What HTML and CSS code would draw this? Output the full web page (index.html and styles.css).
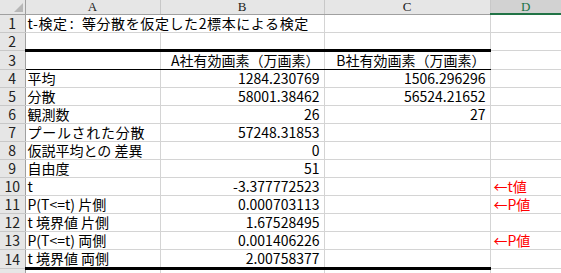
FILE: index.html
```html
<!DOCTYPE html>
<html lang="ja">
<head>
<meta charset="utf-8">
<link rel="stylesheet" href="styles.css">
</head>
<body>
<div class="frame">
<table class="sheet">
  <colgroup>
    <col class="c-hdr"><col class="c-a"><col class="c-b"><col class="c-c"><col class="c-d">
  </colgroup>
  <thead>
    <tr class="colhead">
      <th class="corner"><span class="tri"></span></th>
      <th>A</th><th>B</th><th>C</th><th class="sel">D</th>
    </tr>
  </thead>
  <tbody>
    <tr><th class="rh">1</th><td colspan="2" class="txt title">t-検定<span class="colon">:</span> 等分散を仮定した2標本による検定</td><td></td><td></td></tr>
    <tr class="thick"><th class="rh">2</th><td></td><td></td><td></td><td class="plain"></td></tr>
    <tr class="thin"><th class="rh">3</th><td></td><td class="num">A社有効画素（万画素）</td><td class="num">B社有効画素（万画素）</td><td class="plain"></td></tr>
    <tr><th class="rh">4</th><td class="txt">平均</td><td class="num">1284.230769</td><td class="num">1506.296296</td><td></td></tr>
    <tr><th class="rh">5</th><td class="txt">分散</td><td class="num">58001.38462</td><td class="num">56524.21652</td><td></td></tr>
    <tr><th class="rh">6</th><td class="txt">観測数</td><td class="num">26</td><td class="num">27</td><td></td></tr>
    <tr><th class="rh">7</th><td class="txt wide">プールされた分散</td><td class="num">57248.31853</td><td></td><td></td></tr>
    <tr><th class="rh">8</th><td class="txt">仮説平均との 差異</td><td class="num">0</td><td></td><td></td></tr>
    <tr><th class="rh">9</th><td class="txt">自由度</td><td class="num">51</td><td></td><td></td></tr>
    <tr><th class="rh">10</th><td class="txt">t</td><td class="num">-3.377772523</td><td></td><td class="note">←t値</td></tr>
    <tr><th class="rh">11</th><td class="txt">P(T&lt;=t) 片側</td><td class="num">0.000703113</td><td></td><td class="note">←P値</td></tr>
    <tr><th class="rh">12</th><td class="txt">t 境界値 片側</td><td class="num">1.67528495</td><td></td><td></td></tr>
    <tr><th class="rh">13</th><td class="txt">P(T&lt;=t) 両側</td><td class="num">0.001406226</td><td></td><td class="note">←P値</td></tr>
    <tr class="thick"><th class="rh">14</th><td class="txt">t 境界値 両側</td><td class="num">2.00758377</td><td></td><td class="plain"></td></tr>
    <tr class="stub"><th class="rh"></th><td></td><td></td><td></td><td></td></tr>
  </tbody>
</table>
</div>
</body>
</html>
```
FILE: styles.css
```css
html, body {
  margin: 0;
  padding: 0;
  background: #ffffff;
}
body {
  font-family: "Noto Sans CJK JP", "Noto Sans", sans-serif;
  font-size: 14px;
  color: #000;
}
.frame {
  width: 561px;
  height: 273px;
  overflow: hidden;
}
.sheet {
  border-collapse: collapse;
  table-layout: fixed;
  width: 561px;
}
.c-hdr { width: 25px; }
.c-a { width: 135px; }
.c-b { width: 164px; }
.c-c { width: 166px; }
.c-d { width: 71px; }

.colhead th {
  height: 13px;
  padding: 0;
  background: #e6e6e6;
  border-right: 1px solid #c8c8c8;
  border-bottom: 1px solid #a0a0a0;
  font-family: "Liberation Serif", serif;
  font-weight: normal;
  font-size: 13px;
  line-height: 13px;
  color: #222;
  text-align: center;
  vertical-align: middle;
}
.colhead th.sel {
  background: #d2d2d2;
  color: #217346;
  border-right: none;
  border-bottom: 2px solid #217346;
}
.colhead th.corner {
  position: relative;
  border-right: 1px solid #a0a0a0;
}
.tri {
  position: absolute;
  right: 2px;
  bottom: 2px;
  width: 0;
  height: 0;
  border-left: 9px solid transparent;
  border-bottom: 9px solid #b7b7b7;
}
tbody tr { height: 18px; }
th.rh {
  padding: 0;
  background: #e6e6e6;
  border-right: 1px solid #a0a0a0;
  border-bottom: 1px solid #c8c8c8;
  font-weight: normal;
  font-size: 14px;
  line-height: 17px;
  color: #222;
  text-align: center;
  vertical-align: bottom;
}
td {
  padding: 0 3px 0 2px;
  border-right: 1px solid #d4d4d4;
  border-bottom: 1px solid #d4d4d4;
  line-height: 17px;
  white-space: nowrap;
  overflow: visible;
  vertical-align: bottom;
}
td:last-child {
  border-right: none;
}
td.txt {
  text-align: left;
}
td.title {
  letter-spacing: 0.6px;
}
.colon {
  margin: 0 4px 0 2px;
}
td.wide {
  letter-spacing: 0.7px;
}
td.num {
  text-align: right;
  padding-right: 4px;
}
td.note {
  color: #ff0000;
  padding-left: 3px;
}
tr.thick td {
  border-bottom: 3px solid #000;
}
tr.thin td {
  border-bottom: 1px solid #000;
}
tr.thick td.plain,
tr.thin td.plain {
  border-bottom: 1px solid #d4d4d4;
}
tr.stub {
  height: 6px;
}
tr.stub th,
tr.stub td {
  height: 6px;
  line-height: 0;
  font-size: 0;
  border-bottom: none;
}
```
